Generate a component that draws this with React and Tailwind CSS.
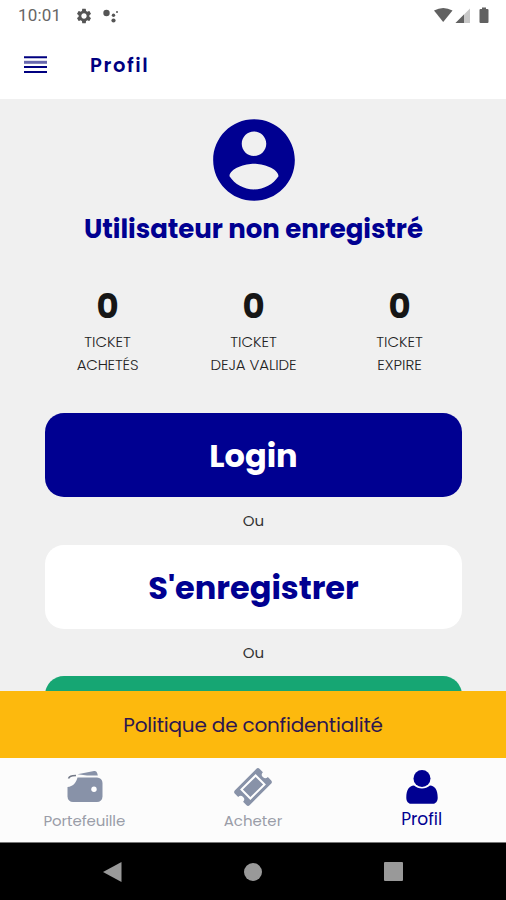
import { MdSettings } from "react-icons/md";

const stats = [
  { value: 0, line1: "TICKET", line2: "ACHETÉS", spacing: "tracking-[-0.2px]" },
  { value: 0, line1: "TICKET", line2: "DEJA VALIDE", spacing: "tracking-[-0.1px]" },
  { value: 0, line1: "TICKET", line2: "EXPIRE", spacing: "tracking-[0px]" },
];

function AvatarIcon() {
  return (
    <svg width="98" height="98" viewBox="0 0 24 24" fill="#000091" className="shrink-0">
      <path d="M12 2C6.480 2 2 6.480 2 12s4.480 10 10 10 10-4.480 10-10S17.520 2 12 2zm0 3c1.660 0 3 1.340 3 3s-1.340 3-3 3-3-1.340-3-3 1.340-3 3-3zm0 14.200c-2.500 0-4.710-1.280-6-3.220.030-1.990 4-3.080 6-3.080 1.990 0 5.970 1.090 6 3.080-1.290 1.940-3.500 3.220-6 3.220z" />
    </svg>
  );
}

function WalletIcon() {
  return (
    <svg width="36" height="34" viewBox="0 0 36 34" fill="#8892a8" className="ml-px">
      <path d="M10.500 4.300 27 1c2-.4 3.200.8 3.800 4.500H20z" />
      <path d="M1.500 8.500C2.500 6 4 5.800 9 5.500" fill="none" stroke="#737987" strokeWidth="1.600" />
      <path d="M10.500 7.500H30a5.500 5.500 0 0 1 5.500 5.500v13.500A5.500 5.500 0 0 1 30 32H6a5.500 5.500 0 0 1-5.500-5.500V17c5.500-.5 8.500-4 10-9.500z" />
      <circle cx="27" cy="19.300" r="2.700" fill="#fff" />
    </svg>
  );
}

function TicketIcon() {
  return (
    <svg width="38" height="38" viewBox="0 0 38 38">
      <g transform="rotate(-45 19 19)">
        <path
          fill="#8892a8"
          d="M4 8.500h30a2.500 2.500 0 0 1 2.500 2.500v4.500a3.500 3.500 0 0 0 0 7V27a2.500 2.500 0 0 1-2.500 2.500H4A2.500 2.500 0 0 1 1.500 27v-4.500a3.500 3.500 0 0 0 0-7V11A2.500 2.500 0 0 1 4 8.500z"
        />
        <rect x="9" y="12.700" width="20" height="12.600" fill="none" stroke="#fff" strokeWidth="2" />
      </g>
    </svg>
  );
}

function UserIcon() {
  return (
    <svg width="32" height="34" viewBox="0 0 32 34" fill="#000091">
      <circle cx="16" cy="8.600" r="8.500" />
      <path d="M8 15.600C3 15.800.3 20 .3 27.500c0 4 2 6.300 5.200 6.300h21c3.200 0 5.200-2.300 5.200-6.300 0-7.500-2.700-11.700-7.700-11.900-2.300 2-5 3-8 3s-5.700-1-8-3z" />
    </svg>
  );
}

function StatusBar() {
  return (
    <div className="flex h-8 items-center justify-between pl-[18px] pr-[16px]">
      <div className="flex items-center">
        <span className="w-[57px] font-[Roboto] text-[17px] tracking-[0.2px] text-[#666]">10:01</span>
        <MdSettings size={18} color="#555" />
        <svg width="17" height="16" viewBox="0 0 17 16" className="ml-[9px]" fill="#555">
          <circle cx="4.500" cy="5" r="3.200" />
          <circle cx="11.500" cy="7.300" r="1.700" />
          <circle cx="11.500" cy="12.500" r="2.100" />
          <circle cx="15" cy="4" r="1" />
        </svg>
      </div>
      <svg width="56" height="18" viewBox="0 0 56 18" fill="#616161">
        <path d="M0 3.500Q9.200-1.500 18.500 3.500L9.200 15z" />
        <path d="M21.500 16 36 1.500V16z" fill="#c8c8c8" />
        <path d="M21.500 16 30 7.500V16z" />
        <path d="M48 .5h4v1.500h1.500a1 1 0 0 1 1 1V15a1 1 0 0 1-1 1h-7a1 1 0 0 1-1-1V3a1 1 0 0 1 1-1H48z" />
      </svg>
    </div>
  );
}

function Header() {
  return (
    <header className="flex h-[67px] items-center pb-px pl-6">
      <svg width="23" height="18" viewBox="0 0 23 18" stroke="#000080" strokeWidth="2">
        <path d="M0 1.200h23M0 11h23M0 16h23" />
        <path d="M0 6.300h23" stroke="#6868ae" strokeWidth="3" />
      </svg>
      <h1 className="ml-[43px] pt-0.5 text-[19.500px] font-semibold tracking-[1.600px] text-[#000080]">Profil</h1>
    </header>
  );
}

function App() {
  return (
    <div className="flex h-[900px] w-[506px] flex-col overflow-hidden bg-white font-['Poppins','Inter',sans-serif]">
      <StatusBar />
      <Header />

      {/* Profile */}
      <main className="flex h-[592px] flex-col items-center overflow-hidden bg-[#f0f0f0] pt-3 pl-px">
        <AvatarIcon />
        <h2 className="mt-0.5 text-[26px] leading-[37px] font-bold tracking-[-0.05px] whitespace-nowrap text-[#000091]">
          Utilisateur non enregistré
        </h2>

        {/* Stats */}
        <div className="mt-[37px] grid w-[438px] shrink-0 grid-cols-3 text-center">
          {stats.map((stat) => (
            <div key={stat.line2}>
              <p className="text-[34px] leading-[42px] font-bold text-[#161616]">{stat.value}</p>
              <p className="mt-[3px] text-[15px] leading-[23px] font-light text-[#222]">{stat.line1}</p>
              <p className={"text-[15px] leading-[23px] font-light text-[#222] " + stat.spacing}>{stat.line2}</p>
            </div>
          ))}
        </div>

        {/* Actions */}
        <button className="mt-[37px] h-[84px] w-[417px] shrink-0 rounded-[19px] bg-[#000091] pt-0.5 text-[32px] font-bold text-white">
          Login
        </button>
        <p className="h-12 shrink-0 text-[15px] leading-[47px] text-[#333]">Ou</p>
        <button className="h-[84px] w-[417px] shrink-0 rounded-[19px] bg-white pt-0.5 text-[32px] font-bold text-[#000091]">
          S'enregistrer
        </button>
        <p className="h-[47px] shrink-0 text-[15px] leading-[47px] text-[#333]">Ou</p>
        <button className="h-[84px] w-[417px] shrink-0 rounded-[19px] bg-[#16a673]" />
      </main>

      <a className="flex h-[67px] items-center justify-center bg-[#fdb90d] text-[20px] tracking-[-0.2px] text-[#2c1650]">
        Politique de confidentialité
      </a>

      {/* Tab bar */}
      <nav className="grid h-[84px] grid-cols-3 bg-[#fcfcfc] text-center">
        <div className="flex flex-col items-center pt-[12px]">
          <WalletIcon />
          <span className="mt-[6px] text-[15px] leading-[22px] tracking-[-0.1px] text-[#9a9da8]">Portefeuille</span>
        </div>
        <div className="flex flex-col items-center pt-[10px]">
          <TicketIcon />
          <span className="mt-1 text-[15px] leading-[22px] text-[#9a9da8]">Acheter</span>
        </div>
        <div className="flex flex-col items-center pt-[12px]">
          <UserIcon />
          <span className="mt-[3px] text-[17px] leading-[25px] text-[#000091]">Profil</span>
        </div>
      </nav>

      {/* System navigation */}
      <div className="flex h-[58px] items-center justify-between border-t border-[#777] bg-black px-[103px]">
        <svg width="19" height="20" viewBox="0 0 19 20" fill="#999">
          <path d="M0 10 18.500 0v20z" />
        </svg>
        <span className="size-[18px] rounded-full bg-[#999]" />
        <span className="size-[19px] rounded-[1px] bg-[#999]" />
      </div>
    </div>
  );
}

export default App;
